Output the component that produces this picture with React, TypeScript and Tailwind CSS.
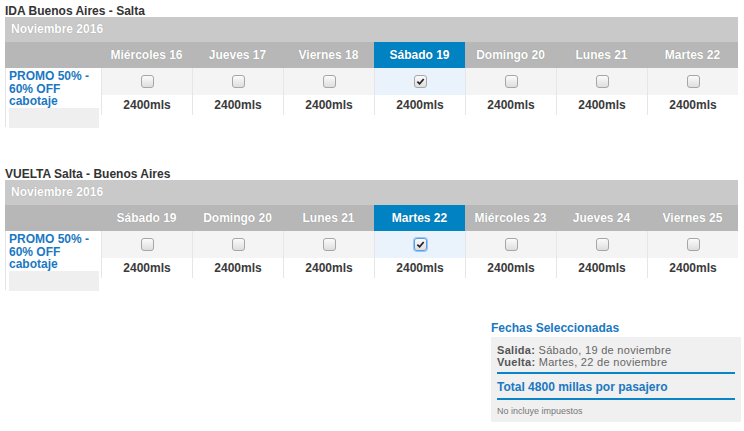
import React from "react";

const font = "font-['Liberation_Sans',Arial,sans-serif]";

type Day = { label: string; checked?: boolean; focus?: boolean };

function Checkbox({ checked, focus }: { checked?: boolean; focus?: boolean }) {
  return (
    <span
      className={`relative inline-flex items-center justify-center w-[13px] h-[13px] rounded-[3px] border bg-gradient-to-b from-[#fbfbfb] to-[#dedede] ${
        focus ? "border-[#5a9ee6] shadow-[0_0_0_1px_#9cc6f2]" : "border-[#a6a6a6]"
      }`}
    >
      {checked && (
        <svg viewBox="0 0 10 10" className="w-[9px] h-[9px]">
          <path d="M1.5 5.2 L4 7.6 L8.6 2.2" fill="none" stroke="#222" strokeWidth="1.9" />
        </svg>
      )}
    </span>
  );
}

function Section({ title, days }: { title: string; days: Day[] }) {
  return (
    <div>
      <div className="h-[12px] leading-[12px] text-[12px] font-bold text-[#333]">{title}</div>
      <div className="w-[733px]">
        <div className="h-[25px] leading-[25px] bg-[#c9c9c9] px-[6px] text-[12px] font-bold text-white [text-shadow:0_0_1px_rgba(0,0,0,0.25)]">
          Noviembre 2016
        </div>
        <div className="grid grid-cols-[96px_repeat(7,91px)] h-[26px] bg-[#b7b7b7]">
          <div />
          {days.map((d) => (
            <div
              key={d.label}
              className={`flex items-center justify-center text-[12px] font-bold text-white [text-shadow:0_0_1px_rgba(0,0,0,0.25)] ${
                d.checked ? "bg-[#0082c3]" : ""
              }`}
            >
              {d.label}
            </div>
          ))}
        </div>
        <div className="grid grid-cols-[96px_repeat(7,91px)]">
          <div className="border-l border-[#e4e4e4] pl-[3px] pt-[2px] h-[59px]">
            <div className="text-[12px] leading-[12.5px] font-bold text-[#1a78c2]">
              PROMO 50% -<br />
              60% OFF<br />
              cabotaje
            </div>
            <div className="w-[90px] h-[20px] bg-[#efefef]" />
          </div>
          {days.map((d) => (
            <div key={d.label} className="border-l border-[#e6e6e6] h-[47px]">
              <div
                className={`h-[27px] flex items-center justify-center ${
                  d.checked ? "bg-[#eaf2fc]" : "bg-[#f4f4f4]"
                }`}
              >
                <Checkbox checked={d.checked} focus={d.focus} />
              </div>
              <div className="h-[20px] flex items-center justify-center text-[12px] font-bold text-[#3a3a3a]">
                2400mls
              </div>
            </div>
          ))}
        </div>
      </div>
    </div>
  );
}

export default function App() {
  const ida: Day[] = [
    { label: "Miércoles 16" },
    { label: "Jueves 17" },
    { label: "Viernes 18" },
    { label: "Sábado 19", checked: true },
    { label: "Domingo 20" },
    { label: "Lunes 21" },
    { label: "Martes 22" },
  ];
  const vuelta: Day[] = [
    { label: "Sábado 19" },
    { label: "Domingo 20" },
    { label: "Lunes 21" },
    { label: "Martes 22", checked: true, focus: true },
    { label: "Miércoles 23" },
    { label: "Jueves 24" },
    { label: "Viernes 25" },
  ];

  return (
    <div className={`${font} w-[744px] h-[431px] bg-white overflow-hidden pl-[5px] pt-[5px]`}>
      <Section title="IDA Buenos Aires - Salta" days={ida} />
      <div className="h-[41px]" />
      <Section title="VUELTA Salta - Buenos Aires" days={vuelta} />
      <div className="flex justify-end pr-[3px] mt-[30px]">
        <div className="w-[250px]">
          <div className="h-[16px] leading-[16px] text-[12px] font-bold text-[#1a78c2]">Fechas Seleccionadas</div>
          <div className="mt-[1px] h-[85px] bg-[#f0f0f0] px-[6px] pt-[7px]">
            <div className="text-[11px] leading-[12px] tracking-[0.3px] text-[#666]">
              <span className="font-bold text-[#555]">Salida:</span> Sábado, 19 de noviembre
            </div>
            <div className="text-[11px] leading-[12px] tracking-[0.3px] text-[#666]">
              <span className="font-bold text-[#555]">Vuelta:</span> Martes, 22 de noviembre
            </div>
            <div className="mt-[4px] border-t-2 border-[#0a84c8] pt-[6px] pb-[4px] text-[12px] leading-[14px] font-bold text-[#1a78c2]">
              Total 4800 millas por pasajero
            </div>
            <div className="border-t-2 border-[#0a84c8] pt-[6px] text-[9px] leading-[10px] text-[#777]">
              No incluye impuestos
            </div>
          </div>
        </div>
      </div>
    </div>
  );
}
